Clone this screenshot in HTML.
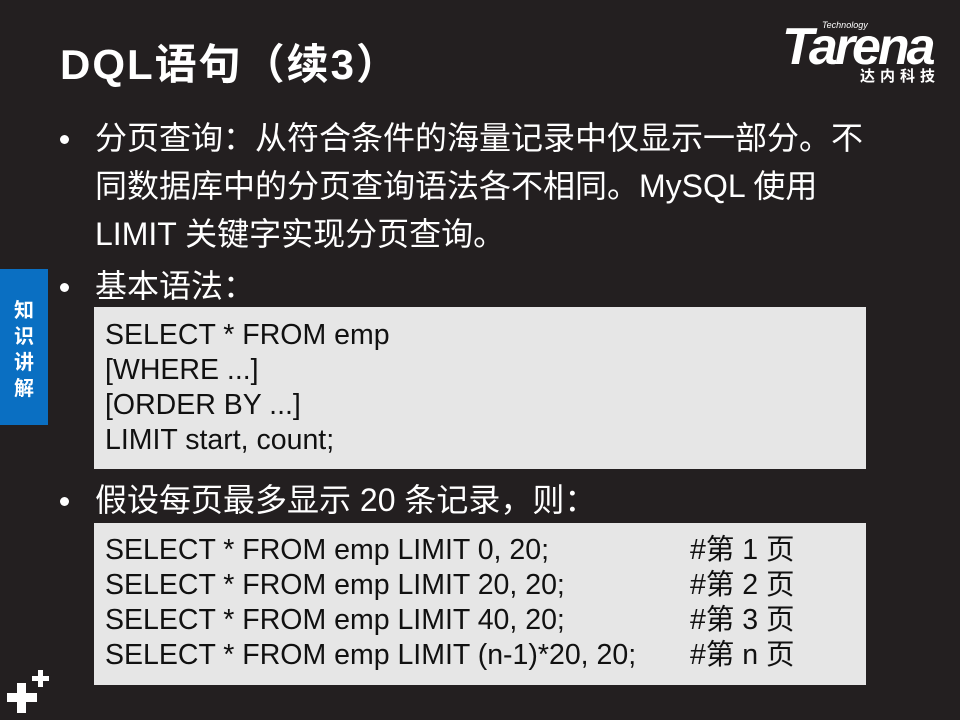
<!DOCTYPE html>
<html><head><meta charset="utf-8"><style>
*{margin:0;padding:0}
body{width:960px;height:720px;background:#231f20;position:relative;overflow:hidden;font-family:"Liberation Sans","Noto Sans CJK SC",sans-serif;color:#fff}
.t{position:absolute;left:60px;top:37px;font-size:42px;font-weight:bold;line-height:56px;letter-spacing:2px}
.side{position:absolute;left:0;top:269px;width:48px;height:156px;background:#0a6fc2;color:#fff;font-weight:bold;font-size:20px;line-height:26px;text-align:center;padding-top:27px;box-sizing:border-box;font-family:"Noto Sans CJK SC",sans-serif}
.b{position:absolute;left:95px;font-size:32px;line-height:48px;white-space:nowrap}
.b:before{content:"";position:absolute;left:-35px;top:21px;width:9px;height:9px;border-radius:50%;background:#fff}
.code{position:absolute;left:94px;width:772px;background:#e6e6e6;color:#111;font-size:28.5px;line-height:35px;padding:0 11px;box-sizing:border-box;white-space:nowrap}
.c{position:absolute;left:596px}
.logo{position:absolute;left:782px;top:18px;width:170px}
</style></head><body>
<div class="t">DQL语句（续3）</div>
<div class="logo">
<div style="position:absolute;left:40px;top:2px;font-size:9px;font-style:italic">Technology</div>
<div style="position:absolute;left:0;top:4px;font-size:52px;font-weight:900;font-style:italic;letter-spacing:-3px;line-height:50px">Tarena</div>
<div style="position:absolute;left:78px;top:47px;font-size:15px;font-weight:bold;letter-spacing:5px">达内科技</div>
</div>
<div class="side">知<br>识<br>讲<br>解</div>
<div class="b" style="top:114px">分页查询：从符合条件的海量记录中仅显示一部分。不<br>同数据库中的分页查询语法各不相同。MySQL 使用<br>LIMIT 关键字实现分页查询。</div>
<div class="b" style="top:262px">基本语法：</div>
<div class="code" style="top:307px;height:162px;padding-top:11px">SELECT * FROM emp<br>[WHERE ...]<br>[ORDER BY ...]<br>LIMIT start, count;</div>
<div class="b" style="top:476px">假设每页最多显示 20 条记录，则：</div>
<div class="code" style="top:523px;height:162px;padding-top:10px">
SELECT * FROM emp LIMIT 0, 20;<span class="c" style="top:10px">#第 1 页</span><br>
SELECT * FROM emp LIMIT 20, 20;<span class="c" style="top:45px">#第 2 页</span><br>
SELECT * FROM emp LIMIT 40, 20;<span class="c" style="top:80px">#第 3 页</span><br>
SELECT * FROM emp LIMIT (n-1)*20, 20;<span class="c" style="top:115px">#第 n 页</span></div>
<svg style="position:absolute;left:0;top:660px" width="60" height="60">
<rect x="7" y="33" width="30" height="9" fill="#fff"/><rect x="17" y="23" width="9" height="30" fill="#fff"/>
<rect x="32" y="16" width="17" height="5" fill="#fff"/><rect x="38" y="10" width="5" height="17" fill="#fff"/>
</svg>
</body></html>
